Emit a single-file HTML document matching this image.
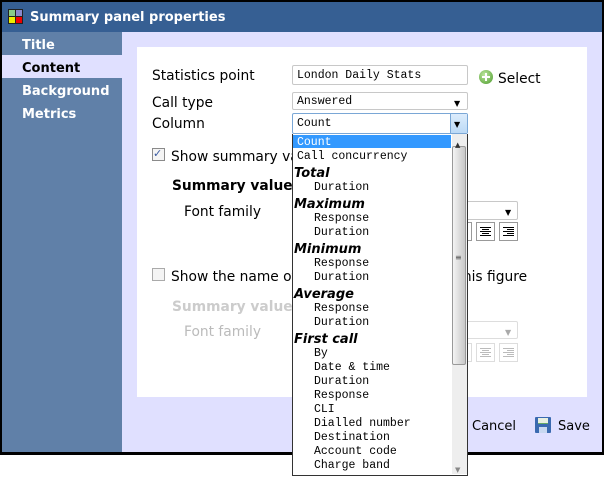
<!DOCTYPE html>
<html><head><style>
*{margin:0;padding:0;box-sizing:border-box}
body{width:604px;height:476px;background:#fff;position:relative;overflow:hidden;font-family:"DejaVu Sans",Verdana,sans-serif;font-size:13.5px;color:#000}
.a{position:absolute}
.t{position:absolute;white-space:nowrap;line-height:14px;padding-top:2px}
.mono{font-family:"Liberation Mono",monospace;font-size:11.5px}
.box{position:absolute;background:#fff;border:1px solid #c8c8c8;border-radius:2px}
.ab{position:absolute;width:19px;height:19px;border:1px solid #999;background:#fff}
.ab i{position:absolute;left:3px;height:1px;background:#000}
.g .ab{border-color:#ddd}.g .ab i{background:#bbb}
.l{font-size:13.8px}
</style></head><body>
<div class="a" style="left:0;top:0;width:604px;height:455px;background:#000"></div>
<div class="a" style="left:2px;top:2px;width:600px;height:30px;background:#365f93"></div>
<div class="a" style="left:8px;top:9px;width:15px;height:15px;background:#222"></div>
<div class="a" style="left:9px;top:10px;width:6px;height:6px;background:#8c8"></div>
<div class="a" style="left:16px;top:10px;width:6px;height:6px;background:#88c"></div>
<div class="a" style="left:9px;top:17px;width:6px;height:6px;background:#ee0"></div>
<div class="a" style="left:16px;top:17px;width:6px;height:6px;background:#e00"></div>
<div class="t" style="left:30px;top:9px;color:#fff;font-weight:bold;font-size:13px">Summary panel properties</div>
<div class="a" style="left:2px;top:32px;width:120px;height:420px;background:#6080a8"></div>
<div class="a" style="left:122px;top:32px;width:480px;height:420px;background:#e0e0ff"></div>
<div class="a" style="left:2px;top:55px;width:120px;height:23px;background:#e0e0ff"></div>
<div class="t" style="left:22px;top:37px;color:#fff;font-weight:bold;font-size:13px">Title</div>
<div class="t" style="left:22px;top:60px;color:#000;font-weight:bold;font-size:13px">Content</div>
<div class="t" style="left:22px;top:83px;color:#fff;font-weight:bold;font-size:13px">Background</div>
<div class="t" style="left:22px;top:106px;color:#fff;font-weight:bold;font-size:13px">Metrics</div>
<div class="a" style="left:137px;top:47px;width:450px;height:350px;background:#fff"></div>

<div class="t l" style="left:152px;top:67px">Statistics point</div>
<div class="box" style="left:292px;top:65px;width:176px;height:20px"></div>
<div class="t mono" style="left:297px;top:67px">London Daily Stats</div>
<div class="a" style="left:479px;top:70px;width:14px;height:14px;border-radius:50%;background:radial-gradient(circle at 40% 35%,#bfe8a0,#4a9a2a)"></div>
<div class="a" style="left:485px;top:73px;width:2px;height:8px;background:#fff"></div>
<div class="a" style="left:482px;top:76px;width:8px;height:2px;background:#fff"></div>
<div class="t l" style="left:498px;top:70px">Select</div>

<div class="t l" style="left:152px;top:94px">Call type</div>
<div class="box" style="left:292px;top:92px;width:176px;height:18px"></div>
<div class="t mono" style="left:297px;top:93px">Answered</div>
<div class="t" style="left:454px;top:95px;font-size:8px">▼</div>

<div class="t l" style="left:152px;top:115px">Column</div>
<div class="box" style="left:292px;top:113px;width:176px;height:21px;border-color:#7aa7d6"></div>
<div class="t mono" style="left:297px;top:115px">Count</div>
<div class="a" style="left:450px;top:114px;width:17px;height:19px;background:linear-gradient(#dcecfc,#bcdaf6);border-left:1px solid #7aa7d6"></div>
<div class="t" style="left:454px;top:116px;font-size:8px">▼</div>

<div class="a" style="left:152px;top:148px;width:13px;height:13px;border:1px solid #8a8a8a;background:#f4f4f4"></div>
<div class="t" style="left:153px;top:145px;color:#3a5aa0;font-size:11px">✓</div>
<div class="t l" style="left:171px;top:148px">Show summary value</div>
<div class="t l" style="left:172px;top:177px;font-weight:bold">Summary value</div>
<div class="t l" style="left:184px;top:203px">Font family</div>
<div class="box" style="left:440px;top:201px;width:78px;height:19px"></div>
<div class="t" style="left:505px;top:204px;font-size:8px">▼</div>
<div><div class="ab" style="left:453px;top:222px"></div>
<div class="ab" style="left:476px;top:222px"><i style="top:4px;width:11px"></i><i style="top:6px;left:5px;width:7px"></i><i style="top:8px;width:11px"></i><i style="top:10px;left:5px;width:7px"></i><i style="top:12px;width:11px"></i></div>
<div class="ab" style="left:499px;top:222px"><i style="top:4px;width:11px"></i><i style="top:6px;left:7px;width:7px"></i><i style="top:8px;width:11px"></i><i style="top:10px;left:7px;width:7px"></i><i style="top:12px;width:11px"></i></div></div>

<div class="a" style="left:152px;top:268px;width:13px;height:13px;border:1px solid #aaa;background:#f4f4f4"></div>
<div class="t l" style="left:171px;top:268px">Show the name of the statistic alongside this figure</div>
<div class="t l" style="left:172px;top:298px;font-weight:bold;color:#ccc">Summary value label</div>
<div class="t l" style="left:184px;top:323px;color:#bbb">Font family</div>
<div class="box" style="left:440px;top:321px;width:78px;height:18px;border-color:#ddd"></div>
<div class="t" style="left:505px;top:324px;font-size:8px;color:#aaa">▼</div>
<div class="g"><div class="ab" style="left:453px;top:343px"></div>
<div class="ab" style="left:476px;top:343px"><i style="top:4px;width:11px"></i><i style="top:6px;left:5px;width:7px"></i><i style="top:8px;width:11px"></i><i style="top:10px;left:5px;width:7px"></i><i style="top:12px;width:11px"></i></div>
<div class="ab" style="left:499px;top:343px"><i style="top:4px;width:11px"></i><i style="top:6px;left:7px;width:7px"></i><i style="top:8px;width:11px"></i><i style="top:10px;left:7px;width:7px"></i><i style="top:12px;width:11px"></i></div></div>

<div class="t" style="left:472px;top:418px;font-size:13px">Cancel</div>
<div class="a" style="left:535px;top:417px;width:16px;height:16px;background:#3a6ab0;border-radius:1px"></div>
<div class="a" style="left:538px;top:418px;width:10px;height:6px;background:#e8f0e0;border-bottom:1px solid #6a6"></div>
<div class="a" style="left:539px;top:427px;width:8px;height:6px;background:#c8d8f0"></div>
<div class="t" style="left:558px;top:418px;font-size:13px">Save</div>

<div class="a" style="left:292px;top:134px;width:176px;height:342px;background:#fff;border:1px solid #333;border-top:none"></div>
<div class="a" style="left:293px;top:135px;width:158px;height:13px;background:#3399ff"></div>
<div class="a" style="left:452px;top:134px;width:15px;height:340px;background:#eee"></div>
<div class="a" style="left:452px;top:146px;width:14px;height:219px;background:linear-gradient(90deg,#f4f4f4,#ddd,#c8c8c8);border:1px solid #999;border-radius:2px"></div>
<div class="t" style="left:455px;top:136px;font-size:7px;color:#333">▲</div>
<div class="t" style="left:455px;top:461px;font-size:7px;color:#888">▼</div>
<div class="t" style="left:455px;top:249px;font-size:8px;color:#555">≡</div>
<div class="t mono" style="left:297px;top:134px;color:#fff">Count</div>
<div class="t mono" style="left:297px;top:148px">Call concurrency</div>
<div class="t" style="left:294px;top:165px;font-weight:bold;font-style:italic;font-size:13px">Total</div>
<div class="t mono" style="left:314px;top:179px">Duration</div>
<div class="t" style="left:294px;top:196px;font-weight:bold;font-style:italic;font-size:13px">Maximum</div>
<div class="t mono" style="left:314px;top:210px">Response</div>
<div class="t mono" style="left:314px;top:224px">Duration</div>
<div class="t" style="left:294px;top:241px;font-weight:bold;font-style:italic;font-size:13px">Minimum</div>
<div class="t mono" style="left:314px;top:255px">Response</div>
<div class="t mono" style="left:314px;top:269px">Duration</div>
<div class="t" style="left:294px;top:286px;font-weight:bold;font-style:italic;font-size:13px">Average</div>
<div class="t mono" style="left:314px;top:300px">Response</div>
<div class="t mono" style="left:314px;top:314px">Duration</div>
<div class="t" style="left:294px;top:331px;font-weight:bold;font-style:italic;font-size:13px">First call</div>
<div class="t mono" style="left:314px;top:345px">By</div>
<div class="t mono" style="left:314px;top:359px">Date &amp; time</div>
<div class="t mono" style="left:314px;top:373px">Duration</div>
<div class="t mono" style="left:314px;top:387px">Response</div>
<div class="t mono" style="left:314px;top:401px">CLI</div>
<div class="t mono" style="left:314px;top:415px">Dialled number</div>
<div class="t mono" style="left:314px;top:429px">Destination</div>
<div class="t mono" style="left:314px;top:443px">Account code</div>
<div class="t mono" style="left:314px;top:457px">Charge band</div>
</body></html>
